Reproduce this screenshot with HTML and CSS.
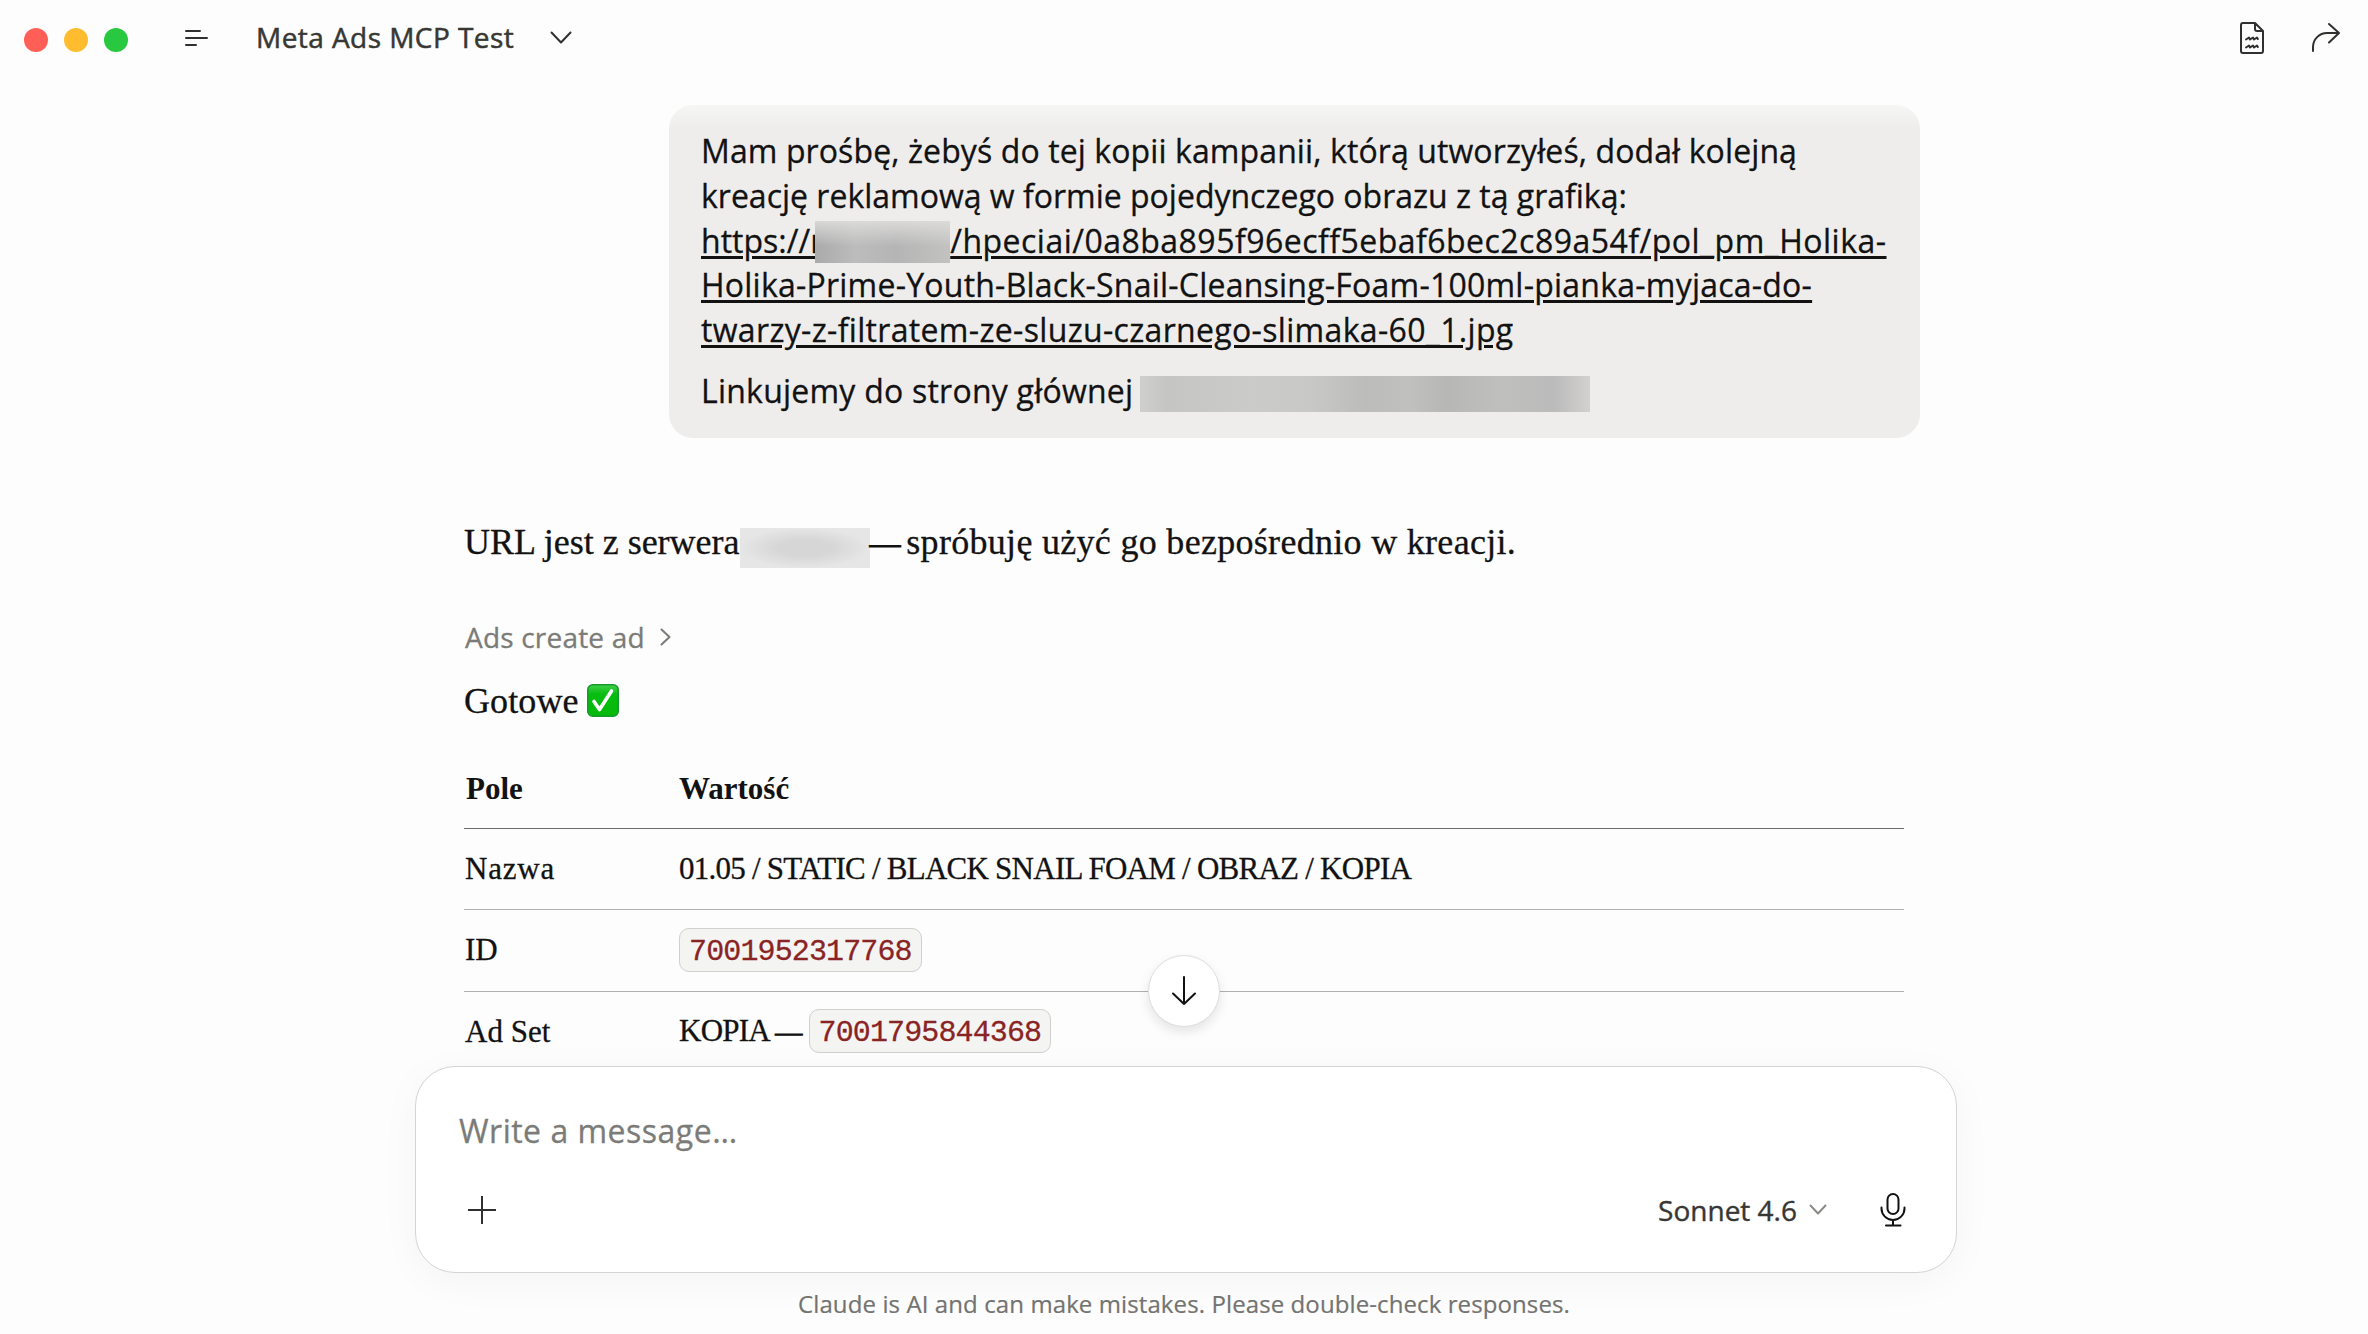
FILE: index.html
```html
<!DOCTYPE html>
<html lang="pl">
<head>
    <meta charset="UTF-8">
    <meta name="viewport" content="width=device-width, initial-scale=1.0">
    <title>Meta Ads MCP Test</title>
    <link rel="stylesheet" href="styles.css">
</head>
<body>
    <header class="topbar">
        <div class="window-btns">
            <span class="dot red"></span>
            <span class="dot yellow"></span>
            <span class="dot green"></span>
        </div>
        <svg class="icon-menu" width="24" height="16" viewBox="0 0 24 16"><path d="M1 1h14M1 8h21M1 15h10"/></svg>
        <h1 class="tit-chat">Meta Ads MCP Test</h1>
        <svg class="icon-down" width="22" height="14" viewBox="0 0 22 14"><path d="M1.5 1.5l9.500 10 9.500-10"/></svg>
        <div class="actions">
            <svg width="26" height="34" viewBox="0 0 26 34"><path d="M4 2h12l8 8v20a2 2 0 0 1-2 2H4a2 2 0 0 1-2-2V4a2 2 0 0 1 2-2zM16 2v6a2 2 0 0 0 2 2h6M7 18.500l3-2 1 2 3-2 1 2 3-2 .8 1.500M7 26.500l3-2 1 2 3-2 1 2 3-2 .8 1.500"/></svg>
            <svg width="30" height="32" viewBox="0 0 30 32"><path d="M2 29v-4A14 14 0 0 1 16 11h12M18 2l10 9-10 9.500"/></svg>
        </div>
    </header>

    <main class="chat">
        <section class="bubble">
            <p>Mam prośbę, żebyś do tej kopii kampanii, którą utworzyłeś, dodał kolejną<br>
            <span class="ls-0">kreację reklamową w formie pojedynczego obrazu z tą grafiką:</span><br>
            <a><span class="ls-0">https://r</span><span class="mask mask-host"></span><span class="ls-3">/hpeciai/0a8ba895f96ecff5ebaf6bec2c89a54f/pol_pm_Holika-</span><br><span class="ls-1">Holika-Prime-Youth-Black-Snail-Cleansing-Foam-100ml-pianka-myjaca-do-</span><br><span class="ls-2">twarzy-z-filtratem-ze-sluzu-czarnego-slimaka-60_1.jpg</span></a></p>
            <p class="ls-1">Linkujemy do strony głównej <span class="mask mask-site"></span></p>
        </section>

        <section class="answer">
            <p class="txt-first">URL jest z serwera<span class="mask mask-server"></span><span class="dash">— </span><span class="ls-1">spróbuję użyć go bezpośrednio w kreacji.</span></p>
            <div class="tool">Ads create ad <svg width="12" height="18" viewBox="0 0 12 18"><path d="M1.500 1.500l8 7.500-8 7.500"/></svg></div>
            <p class="txt-done">Gotowe <svg class="check" width="32" height="33" viewBox="0 0 32 33"><defs><linearGradient id="g" x1="0" y1="0" x2="0" y2="1"><stop offset="0" stop-color="#43cf4a"/><stop offset=".3" stop-color="#06bd10"/><stop offset="1" stop-color="#04b90c"/></linearGradient></defs><rect x=".75" y=".75" width="30.500" height="31.500" rx="5" fill="url(#g)" stroke="#169a2c" stroke-width="1.500"/><path d="M7 17.500l5.500 8L24.500 7" fill="none" stroke="#fff" stroke-width="3.600" stroke-linejoin="round"/></svg></p>
            <table class="tbl">
                <thead>
                    <tr><th>Pole</th><th>Wartość</th></tr>
                </thead>
                <tbody>
                    <tr><td class="wide">Nazwa</td><td class="tight">01.05 / STATIC / BLACK SNAIL FOAM / OBRAZ / KOPIA</td></tr>
                    <tr><td>ID</td><td><code>7001952317768</code></td></tr>
                    <tr><td>Ad Set</td><td><span class="tight">KOPIA <span class="dash-sm">—</span> </span><code>7001795844368</code></td></tr>
                </tbody>
            </table>
        </section>
    </main>

    <footer class="bottom">
        <button class="btn-scroll"><svg width="24" height="30" viewBox="0 0 24 30"><path d="M12 1v27M1 17.500l11 10.500 11-10.500"/></svg></button>
        <div class="composer">
            <div class="placeholder">Write a message…</div>
            <div class="tools">
                <svg class="icon-plus" width="28" height="28" viewBox="0 0 28 28"><path d="M14 0v28M0 14h28"/></svg>
                <span class="model">Sonnet 4.6</span>
                <svg class="icon-model" width="18" height="12" viewBox="0 0 18 12"><path d="M1.500 1.500l7.500 8 7.500-8"/></svg>
                <svg class="icon-mic" width="26" height="34" viewBox="0 0 26 34"><rect x="7.500" y="1" width="11" height="20" rx="5.500"/><path d="M1.500 14.500v1a11.500 11.500 0 0 0 23 0v-1M13 27v5.500M6 32.500h14.500"/></svg>
            </div>
        </div>
        <p class="note">Claude is AI and can make mistakes. Please double-check responses.</p>
    </footer>
</body>
</html>
```
FILE: styles.css
```css
* {
    box-sizing: border-box;
}
body {
    margin: 0;
    height: 1334px;
    display: flex;
    flex-direction: column;
    overflow: hidden;
    background: #fdfdfd;
    color: #121212;
    font-family: 'Open Sans', sans-serif;
}
h1, p {
    margin: 0;
}
svg {
    fill: none;
    stroke: #30302e;
    stroke-width: 2;
    stroke-linecap: round;
    stroke-linejoin: round;
}

/* top bar */
.topbar {
    display: flex;
    align-items: center;
    height: 76px;
    padding: 0 27px 0 24px;
    flex: none;
}
.window-btns {
    display: flex;
    gap: 16px;
    margin-top: 4px;
}
.dot {
    width: 24px;
    height: 24px;
    border-radius: 50%;
}
.red {
    background: #ff5f57;
}
.yellow {
    background: #febc2e;
}
.green {
    background: #28c840;
}
.icon-menu {
    margin-left: 57px;
}
.tit-chat {
    margin: -2px 0 0 47px;
    font-size: 28px;
    font-weight: 500;
    line-height: 40px;
    letter-spacing: 0.45px;
    color: #373734;
    -webkit-text-stroke: 0.5px;
}
.icon-down {
    margin-left: 36px;
}
.actions {
    display: flex;
    align-items: center;
    gap: 46px;
    margin-left: auto;
}

/* user message */
.chat {
    width: 1440px;
    height: 990px;
    margin-left: 464px;
    padding-top: 29px;
    flex: none;
}
.bubble {
    width: 1251px;
    height: 333px;
    margin-left: 205px;
    padding: 24px 0 0 32px;
    border-radius: 24px;
    background: linear-gradient(#f6f6f4, #eeedeb 24px);
    font-size: 32px;
    line-height: 44.8px;
    letter-spacing: 0.1px;
    white-space: nowrap;
    -webkit-text-stroke: 0.3px;
}
.bubble p + p {
    margin-top: 16px;
}
.bubble a {
    text-decoration: underline;
    text-decoration-thickness: 3px;
    text-underline-offset: 3px;
}
.ls-0 {
    letter-spacing: 0;
}
.ls-1 {
    letter-spacing: 0.23px;
}
.ls-2 {
    letter-spacing: 0.33px;
}
.ls-3 {
    letter-spacing: 0.48px;
}
.mask {
    display: inline-block;
}
.mask-host {
    position: relative;
    width: 135px;
    height: 42px;
    margin-left: -8px;
    vertical-align: -10px;
    background: linear-gradient(rgba(222, 221, 220, 0.9), rgba(190, 190, 190, 0) 60%), linear-gradient(90deg, #aaa, #bcbcbc 30%, #b5b5b5 60%, #c2c2c1);
}
.mask-site {
    width: 450px;
    height: 36px;
    margin-left: -2px;
    vertical-align: -9px;
    background: linear-gradient(90deg, #cfcfce, #c5c5c4 6%, #cbcbca 25%, #c8c8c7 38%, #bcbcbb 50%, #c0c0bf 60%, #b7b7b6 68%, #bfbfbe 80%, #bbb 92%, #d3d1cf);
}

/* assistant answer */
.answer {
    padding-top: 79px;
    font-family: 'Liberation Serif', serif;
    font-size: 36px;
    line-height: 50px;
    white-space: nowrap;
    -webkit-text-stroke: 0.3px;
}
.txt-first {
    height: 50px;
}
.txt-first .ls-1 {
    letter-spacing: 0.3px;
}
.mask-server {
    width: 130px;
    height: 40px;
    vertical-align: -14px;
    background: radial-gradient(closest-side, #d6d6d6 40%, #e6e6e6);
}
.dash {
    font-size: 31px;
    letter-spacing: -1px;
    -webkit-text-stroke: 1px;
}
.tool {
    display: flex;
    align-items: center;
    gap: 15px;
    margin-top: 50px;
    padding-left: 1px;
    font: 28px/40px 'Open Sans', sans-serif;
    letter-spacing: 0.2px;
    color: #7b7b78;
}
.tool svg {
    stroke: #7b7b78;
}
.txt-done {
    height: 50px;
    margin-top: 19px;
    letter-spacing: 0.1px;
}
.check {
    margin-left: -1px;
    vertical-align: -4px;
    stroke: none;
}
.tbl {
    width: 1440px;
    margin-top: 43px;
    border-collapse: separate;
    border-spacing: 0;
    table-layout: fixed;
    font-size: 31px;
    line-height: 40px;
    text-align: left;
}
.tbl th {
    padding: 0 0 19px 2px;
    border-bottom: 1px solid #6d6d6b;
    -webkit-text-stroke: 0;
}
.tbl th:first-child {
    width: 214px;
}
.tbl td {
    height: 81.3px;
    padding: 0 0 1px 1px;
    border-bottom: 1px solid #b0b0ae;
}
.tbl th + th {
    padding-left: 1px;
}
.tbl tr:last-child td {
    border-bottom: 0;
}
.tbl .wide {
    letter-spacing: 0.8px;
}
.tight {
    letter-spacing: -0.75px;
}
.dash-sm {
    font-size: 27px;
    -webkit-text-stroke: 1px;
}
code {
    padding: 6px 9px 2px;
    border: 1px solid #d0d0ce;
    border-radius: 10px;
    background: #f4f4f3;
    color: #8a2424;
    font: 30px/1 'Liberation Mono', monospace;
    letter-spacing: -0.87px;
}

/* message box */
.bottom {
    position: relative;
    flex: 1;
}
.btn-scroll {
    position: absolute;
    top: -111px;
    left: 50%;
    display: flex;
    align-items: center;
    justify-content: center;
    width: 72px;
    height: 72px;
    margin-left: -36px;
    border: 1px solid #dededc;
    border-radius: 50%;
    background: #fff;
    box-shadow: 0 5px 12px rgba(0, 0, 0, 0.1);
}
.btn-scroll svg {
    stroke: #111;
}
.composer {
    width: 1542px;
    height: 207px;
    margin-left: 415px;
    padding: 42px 50px 0 43px;
    border: 1px solid #d4d4d2;
    border-radius: 40px;
    background: #fff;
    box-shadow: 0 8px 40px rgba(0, 0, 0, 0.04);
}
.placeholder {
    font-size: 32px;
    line-height: 44px;
    letter-spacing: 0.5px;
    color: #7b7b78;
    -webkit-text-stroke: 0.3px;
}
.tools {
    display: flex;
    align-items: center;
    height: 40px;
    margin-top: 37px;
}
.icon-plus {
    margin-left: 9px;
    stroke-linecap: butt;
}
.model {
    margin: -1px 0 0 auto;
    font-size: 28px;
    line-height: 40px;
    color: #373734;
    -webkit-text-stroke: 0.4px;
}
.icon-model {
    margin-left: 12px;
    stroke: #8a8a87;
}
.icon-mic {
    margin-left: 53px;
    stroke: #111;
}
.note {
    margin-top: 14px;
    font-size: 24px;
    line-height: 34px;
    letter-spacing: 0.1px;
    text-align: center;
    color: #737370;
    -webkit-text-stroke: 0.2px;
}
```
